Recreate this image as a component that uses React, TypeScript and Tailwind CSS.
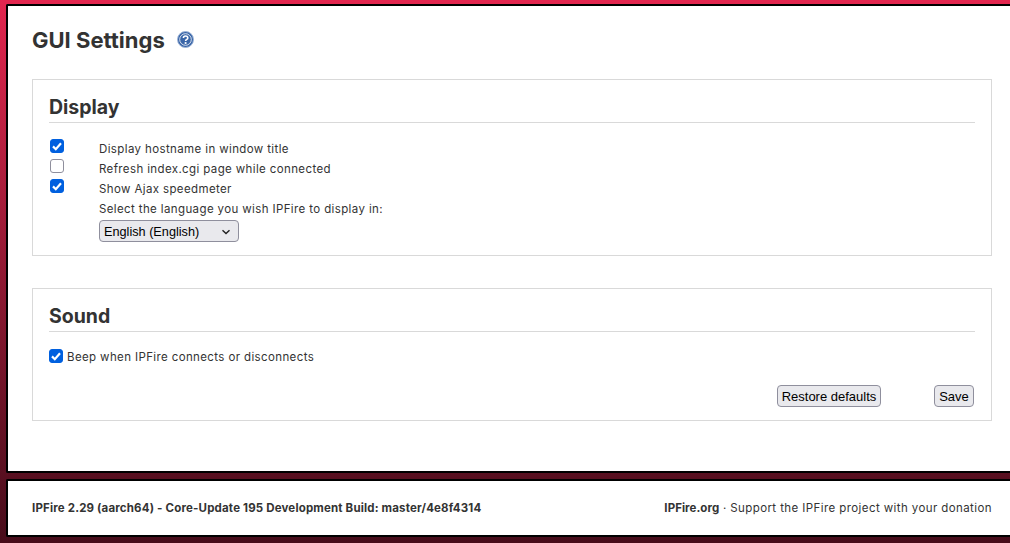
const body = "font-['Inter',sans-serif]";

function Check({ checked, className = "" }: { checked: boolean; className?: string }) {
  return (
    <span className={`relative inline-flex h-[14px] w-[14px] shrink-0 ${className}`}>
      <input
        type="checkbox"
        defaultChecked={checked}
        className={`h-[14px] w-[14px] appearance-none rounded-[3px] border ${checked ? "border-[#0060df] bg-[#0060df]" : "border-[#8f8f9d] bg-white"}`}
      />
      {checked && (
        <svg viewBox="0 0 14 14" className="pointer-events-none absolute left-0 top-0 h-[14px] w-[14px]">
          <path d="M3 7.4 5.8 10.2 11 4.2" fill="none" stroke="white" strokeWidth="2.2" />
        </svg>
      )}
    </span>
  );
}

function Heading({ children }: { children: string }) {
  return (
    <h2 className="border-b border-[#d9d9d9] pb-[2px] text-[19.5px] font-bold leading-[25px] tracking-normal text-[#333]">{children}</h2>
  );
}

function Row({ checked, children }: { checked: boolean; children: string }) {
  return (
    <div className="flex h-5 items-center">
      <div className="w-[50px]">
        <Check checked={checked} className="-translate-y-[1px] translate-x-[1px]" />
      </div>
      <span>{children}</span>
    </div>
  );
}

export default function App() {
  return (
    <div className={`${body} flex h-[543px] w-[1010px] flex-col overflow-hidden bg-gradient-to-b from-[#e3264f] to-[#470c1a] pt-[4px] text-[11.5px] tracking-[0.38px] text-[#333]`}>
      <main className="ml-[6px] h-[469px] rounded-l-[2px] border-y-2 border-l-2 border-black bg-white pl-[24px] pr-[18px]">
        <div className="flex h-[73px] items-center pb-[6px]">
          <h1 className="text-[22px] font-bold leading-none tracking-normal text-[#333]">GUI Settings</h1>
          <svg viewBox="0 0 17 17" className="ml-[12px] h-[17px] w-[17px]">
            <circle cx="8.5" cy="8.5" r="8" fill="#3a66a8" stroke="#9fb6d8" strokeWidth="1" />
            <circle cx="8.5" cy="8.5" r="5.8" fill="none" stroke="#ffffff" strokeWidth="1" opacity="0.8" />
            <path d="M6.4 6.9C6.4 4.4 10.8 4.4 10.8 6.9 10.8 8.5 8.6 8.3 8.6 10.1" fill="none" stroke="white" strokeWidth="1.6" />
            <rect x="7.7" y="11.1" width="1.8" height="1.8" fill="white" />
          </svg>
        </div>

        <section className="h-[177px] border border-[#d9d9d9] px-4 pt-[15px]">
          <Heading>Display</Heading>
          <div className="mt-[17px]">
            <Row checked>Display hostname in window title</Row>
            <Row checked={false}>Refresh index.cgi page while connected</Row>
            <Row checked>Show Ajax speedmeter</Row>
            <div className="ml-[50px] flex h-5 items-center">Select the language you wish IPFire to display in:</div>
            <div className="relative ml-[50px] h-[22px] w-[140px]">
              <select className="h-[22px] w-[140px] appearance-none rounded-[4px] border border-[#8f8f9d] bg-[#e9e9ed] pl-[4px] pt-[2px] font-['Liberation_Sans',sans-serif] text-[12.7px] tracking-normal text-black">
                <option>English (English)</option>
              </select>
              <svg viewBox="0 0 10 6" className="pointer-events-none absolute right-[8px] top-[9px] h-[6px] w-[10px]">
                <path d="M1.5 1.2 5 4.6 8.5 1.2" fill="none" stroke="#222" strokeWidth="1.4" />
              </svg>
            </div>
          </div>
        </section>

        <section className="mt-[32px] h-[133px] border border-[#d9d9d9] px-4 pt-[15px]">
          <Heading>Sound</Heading>
          <div className="mt-[16px] flex h-5 items-center gap-[4px]">
            <Check checked className="-translate-y-[2px]" />
            <span>Beep when IPFire connects or disconnects</span>
          </div>
          <div className="mt-[17px] flex justify-end pr-[1px]">
            <button className="h-[22px] w-[104px] rounded-[4px] border border-[#8f8f9d] bg-[#e9e9ed] pt-[1px] font-['Liberation_Sans',sans-serif] text-[13px] tracking-normal text-black">Restore defaults</button>
            <button className="ml-[53px] h-[22px] w-[40px] rounded-[4px] border border-[#8f8f9d] bg-[#e9e9ed] pt-[1px] font-['Liberation_Sans',sans-serif] text-[13px] tracking-normal text-black">Save</button>
          </div>
        </section>
      </main>

      <footer className="ml-[6px] mt-[6px] flex h-[58px] items-center justify-between rounded-l-[2px] border-y-2 border-l-2 border-black bg-white pl-[24px] pr-[18px] pt-[2px]">
        <span className="font-bold tracking-[0.17px]">IPFire 2.29 (aarch64) - Core-Update 195 Development Build: master/4e8f4314</span>
        <span className="tracking-[0.41px]"><b className="tracking-[0.05px]">IPFire.org</b> · Support the IPFire project with your donation</span>
      </footer>
    </div>
  );
}
